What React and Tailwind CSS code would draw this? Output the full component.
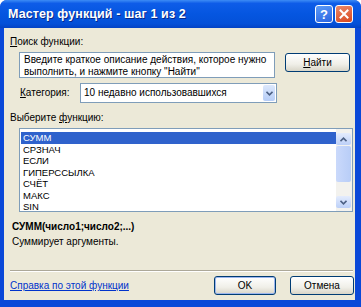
export default function App() {
  const items = ["СУММ", "СРЗНАЧ", "ЕСЛИ", "ГИПЕРССЫЛКА", "СЧЁТ", "МАКС", "SIN"];
  return (
    <div className="w-[361px] h-[307px] flex flex-col bg-[#0a48d8] rounded-t-[7px] overflow-hidden" style={{ fontFamily: '"Liberation Sans", Arial, sans-serif' }}>
      {/* title bar */}
      <div className="h-[28px] shrink-0 flex items-center pl-[8px] pr-[8px] bg-[linear-gradient(180deg,#3d8cf5_0%,#0e5ce8_12%,#0556e0_50%,#0450d8_85%,#0342c4_100%)]">
        <div className="text-white font-bold text-[12.5px] tracking-[0.1px] [text-shadow:1px_1px_0_#0a2a8a] flex-1">Мастер функций - шаг 1 из 2</div>
        <div className="w-[18px] h-[18px] rounded-[3px] border border-white bg-[linear-gradient(160deg,#5d9cf8,#2a63e0)] flex items-center justify-center text-white font-bold text-[13px] leading-none mr-[2px]">?</div>
        <div className="w-[18px] h-[18px] rounded-[3px] border border-white bg-[linear-gradient(160deg,#ec8a6a,#d8461e)] flex items-center justify-center">
          <svg width="10" height="10" viewBox="0 0 10 10"><path d="M1.5 1.5 L8.5 8.5 M8.5 1.5 L1.5 8.5" stroke="white" strokeWidth="2" strokeLinecap="square" /></svg>
        </div>
      </div>
      {/* body */}
      <div className="flex-1 ml-[4px] mr-[6px] mb-[7px] bg-[#ece9d8] flex flex-col pl-[6px] text-[10px] text-black leading-[12px]">
        <div className="mt-[8px]"><span className="underline">П</span>оиск функции:</div>
        <div className="mt-[4px] flex items-start">
          <div className="ml-[9px] w-[256px] h-[26px] bg-white border border-[#7f9db9] px-[4px] pt-[1px] text-[10px] leading-[12px]">
            Введите краткое описание действия, которое нужно выполнить, и нажмите кнопку "Найти"
          </div>
          <div className="ml-[10px] mt-[1px] w-[65px] h-[19px] rounded-[3px] border border-[#003c74] bg-[linear-gradient(180deg,#ffffff,#f0efe8_60%,#d8d5c8)] flex items-center justify-center">
            <span><span className="underline">Н</span>айти</span>
          </div>
        </div>
        <div className="mt-[5px] flex items-center h-[20px]">
          <div className="ml-[10px] w-[60px]"><span className="underline">К</span>атегория:</div>
          <div className="w-[197px] h-[20px] bg-white border border-[#7f9db9] flex items-center pl-[3px]">
            <span className="flex-1">10 недавно использовавшихся</span>
            <div className="w-[12px] h-[16px] mr-[1px] rounded-[2px] bg-[linear-gradient(180deg,#dce8fc,#b6cdf7)] flex items-center justify-center">
              <svg width="7" height="5" viewBox="0 0 7 5"><path d="M0.5 0.8 L3.5 3.8 L6.5 0.8" stroke="#4d6185" strokeWidth="1.6" fill="none" /></svg>
            </div>
          </div>
        </div>
        <div className="mt-[9px]">Выберите <span className="underline">ф</span>ункцию:</div>
        <div className="mt-[4px] ml-[9px] w-[334px] h-[84px] bg-white border border-[#7f9db9] flex">
          <div className="flex-1 pt-[3px] pl-[1px]">
            {items.map((it, i) => (
              <div key={it} className={"h-[11.5px] leading-[11.5px] pl-[2px] text-[9.5px] " + (i === 0 ? "bg-[#2f62cc] text-white" : "text-black")}>{it}</div>
            ))}
          </div>
          <div className="w-[16px] bg-[#f3f2ee] flex flex-col py-[1px] pr-[1px]">
            <div className="h-[12px] mt-[3px] rounded-[2px] bg-[linear-gradient(180deg,#e4ecfd,#bcd0f8)] flex items-center justify-center">
              <svg width="7" height="5" viewBox="0 0 7 5"><path d="M0.5 4.2 L3.5 1.2 L6.5 4.2" stroke="#4d6185" strokeWidth="1.6" fill="none" /></svg>
            </div>
            <div className="h-[36px] mt-[1px] rounded-[2px] bg-[linear-gradient(90deg,#cad9fb,#b8cdf7)]"></div>
            <div className="flex-1"></div>
            <div className="h-[12px] mb-[2px] rounded-[2px] bg-[linear-gradient(180deg,#e4ecfd,#bcd0f8)] flex items-center justify-center">
              <svg width="7" height="5" viewBox="0 0 7 5"><path d="M0.5 0.8 L3.5 3.8 L6.5 0.8" stroke="#4d6185" strokeWidth="1.6" fill="none" /></svg>
            </div>
          </div>
        </div>
        <div className="mt-[9px] ml-[2px] font-bold">СУММ(число1;число2;...)</div>
        <div className="mt-[3px] ml-[2px]">Суммирует аргументы.</div>
        <div className="flex-1"></div>
        <div className="mr-[2px] h-[2px] border-t border-[#aca899] border-b border-b-white"></div>
        <div className="h-[28px] flex items-start pt-[4px]">
          <div className="mt-[4px] text-[#0033cc] underline flex-1">Справка по этой функции</div>
          <div className="w-[62px] h-[19px] rounded-[3px] border border-[#003c74] bg-[linear-gradient(180deg,#ffffff,#f0efe8_60%,#d8d5c8)] shadow-[inset_0_0_0_1px_#9cb6ee] flex items-center justify-center">OK</div>
          <div className="ml-[14px] mr-[1px] w-[64px] h-[19px] rounded-[3px] border border-[#003c74] bg-[linear-gradient(180deg,#ffffff,#f0efe8_60%,#d8d5c8)] flex items-center justify-center">Отмена</div>
        </div>
      </div>
    </div>
  );
}
